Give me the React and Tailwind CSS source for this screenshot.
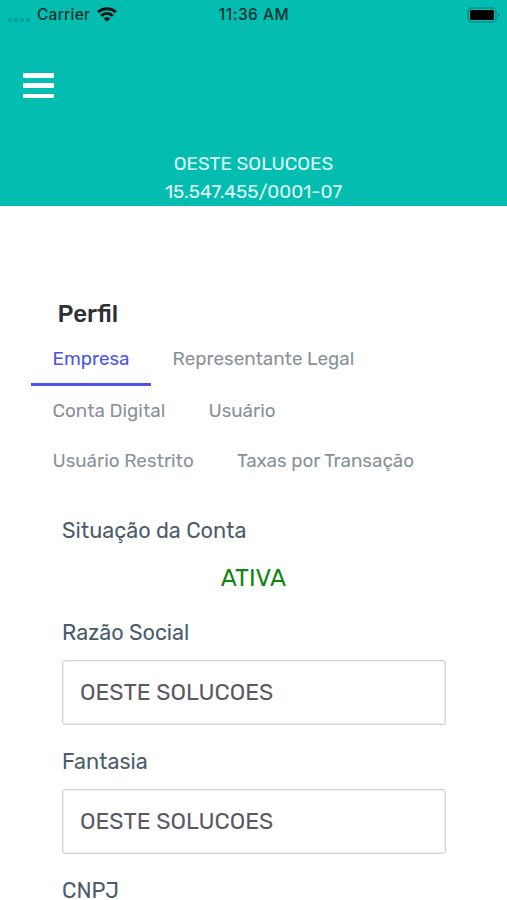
const FONT = "font-[Rubik,Roboto,'Noto_Sans',sans-serif]";

function StatusBar() {
  return (
    <div className="grid h-[28px] grid-cols-3 items-center pl-[8px] pr-[7px] font-[Inter,sans-serif] text-[16px] font-medium leading-[28px] text-[#07312f]">
      <div className="flex items-center">
        <div className="mt-[10px] flex w-[29px] gap-[2px]">
          <i className="size-[4px] rounded-full bg-[#079d94]" />
          <i className="size-[4px] rounded-full bg-[#079d94]" />
          <i className="size-[4px] rounded-full bg-[#079d94]" />
          <i className="size-[4px] rounded-full bg-[#079d94]" />
        </div>
        <span className="mt-[1px] w-[60px] whitespace-nowrap text-[15.5px] tracking-[0.25px]">Carrier</span>
        <svg className="h-[15px] w-[20px]" viewBox="0 0 20 15" fill="none" stroke="#001413" strokeWidth="2.9">
          <path d="M1 5.300C6 .6 14 .6 19 5.300M4.200 8.800c3.400-3 8.200-3 11.600 0" />
          <path d="M10 14.800 6.600 11.500c2-1.700 4.800-1.700 6.800 0Z" fill="#001413" stroke="none" />
        </svg>
      </div>
      <span className="mt-[1px] whitespace-nowrap text-center text-[15.5px] tracking-[0.5px]">11:36 AM</span>
      <svg className="h-[16px] w-[33px] justify-self-end" viewBox="0 0 33 16">
        <rect x="1" y="1" width="28" height="14" rx="4" fill="none" stroke="#078f86" strokeWidth="1.7" />
        <rect x="3" y="3" width="24" height="10" rx="1.500" fill="#000" />
        <path d="M31 5.800c2.200.8 2.200 3.600 0 4.400Z" fill="#078f86" />
      </svg>
    </div>
  );
}

function Tab({ children, className = "h-[50px]" }) {
  return <button className={`whitespace-nowrap pl-[21.5px] text-left ${className}`}>{children}</button>;
}

function Label({ children }) {
  return <label className="block pt-[5px] text-[21.7px] leading-[20px] text-[#4b5c6c]">{children}</label>;
}

function Field({ label, value }) {
  return (
    <div className="mb-[22px]">
      <Label>{label}</Label>
      <div className="mt-[17px] flex h-[65px] w-[384px] items-center rounded-[3px] border border-[#d2d2d4] pl-[17px] pt-[2px] text-[22.9px] text-[#5b5865] shadow-[inset_0_0_0_1px_#f0f0f1]">
        {value}
      </div>
    </div>
  );
}

export default function App() {
  return (
    <div className={`h-[900px] w-[507px] overflow-hidden bg-white ${FONT}`}>
      <header className="h-[206px] bg-[#02bdb0]">
        <StatusBar />
        <button className="ml-[22.5px] mt-[45px] flex h-[25px] w-[31px] flex-col justify-between" aria-label="Menu">
          <span className="h-[4.5px] w-full rounded-[1px] bg-white" />
          <span className="h-[4.5px] w-full rounded-[1px] bg-white" />
          <span className="h-[4.5px] w-full rounded-[1px] bg-white" />
        </button>
        <div className="pt-[51.5px] text-center text-[18.9px] leading-[28px] text-[#e0fffb]">
          <p>OESTE SOLUCOES</p>
          <p>15.547.455/0001-07</p>
        </div>
      </header>
      <main className="pt-[93px]">
        <h1 className="h-[35px] pl-[57.5px] text-[24px] font-medium leading-[30px] text-[#2e3033]">Perfil</h1>
        <nav className="ml-[31px] text-[18.85px] text-[#88919b]">
          <div className="flex h-[52px]">
            <Tab className="h-[52px] w-[120px] border-b-[3px] border-[#4a55e8] pt-[2px] text-[#4a55e8]">Empresa</Tab>
            <Tab>Representante Legal</Tab>
          </div>
          <div className="flex">
            <Tab className="h-[50px] w-[156px]">Conta Digital</Tab>
            <Tab>Usuário</Tab>
          </div>
          <div className="flex">
            <Tab className="h-[50px] w-[184.5px]">Usuário Restrito</Tab>
            <Tab>Taxas por Transação</Tab>
          </div>
        </nav>
        <section className="pl-[62px] pt-[30px]">
          <p className="text-[21.7px] leading-[30px] text-[#4b5c6c]">Situação da Conta</p>
          <p className="mt-[17px] w-[383px] text-center text-[24px] leading-[30px] text-[#0c870c]">ATIVA</p>
          <div className="pt-[24.5px]">
            <Field label="Razão Social" value="OESTE SOLUCOES" />
            <Field label="Fantasia" value="OESTE SOLUCOES" />
            <Label>CNPJ</Label>
          </div>
        </section>
      </main>
    </div>
  );
}
